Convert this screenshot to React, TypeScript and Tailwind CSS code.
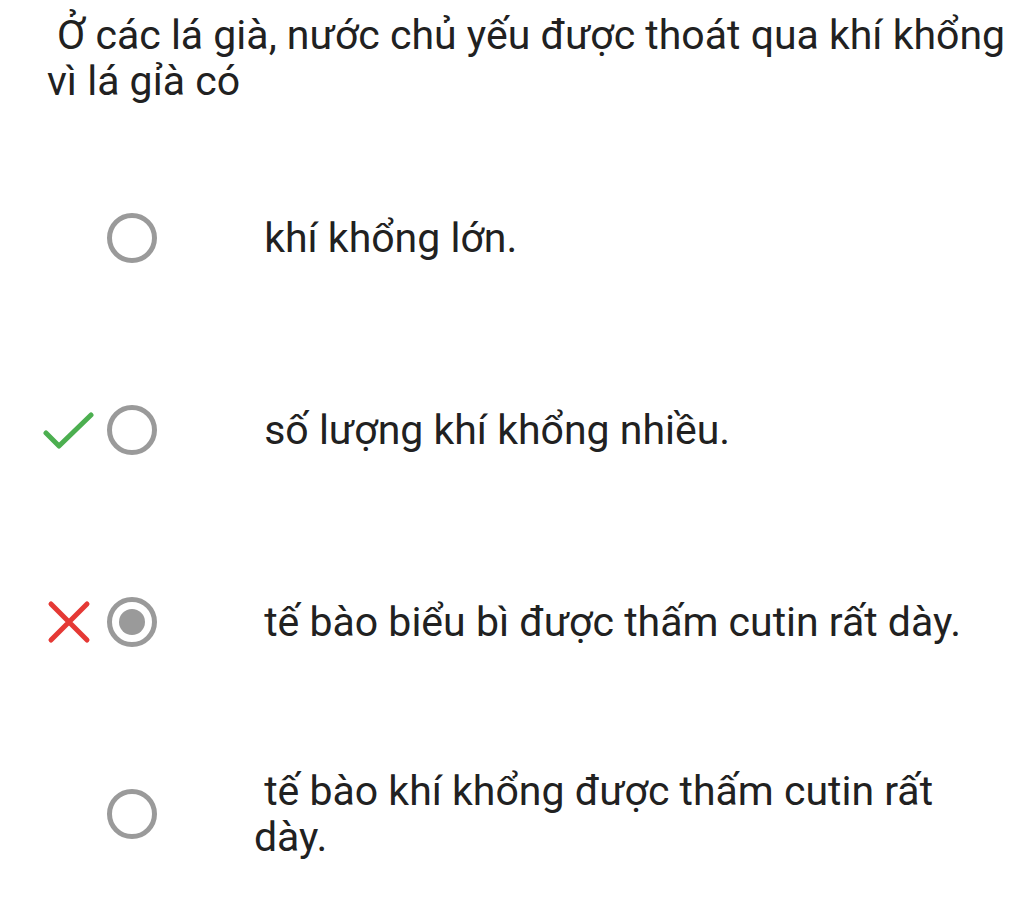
import { useState } from "react";

type Option = {
  text: string;
  mark?: "correct" | "wrong";
};

const options: Option[] = [
  { text: "\u00a0khí khổng lớn." },
  { text: "\u00a0số lượng khí khổng nhiều.", mark: "correct" },
  { text: "\u00a0tế bào biểu bì được thấm cutin rất dày.", mark: "wrong" },
  { text: "\u00a0tế bào khí khổng được thấm cutin rất dày." },
];

function CheckMark() {
  return (
    <svg width="52" height="40" viewBox="0 0 52 40" fill="none">
      <path
        d="M3 23 L16 36 L48 5"
        stroke="#4caf50"
        strokeWidth="5"
        strokeLinecap="round"
        strokeLinejoin="round"
      />
    </svg>
  );
}

function CrossMark() {
  return (
    <svg width="44" height="44" viewBox="0 0 44 44" fill="none">
      <path
        d="M4 4 L40 40 M40 4 L4 40"
        stroke="#e53935"
        strokeWidth="5"
        strokeLinecap="round"
      />
    </svg>
  );
}

export default function App() {
  const [selected, setSelected] = useState(2);

  return (
    <div className="min-h-[908px] w-[1024px] overflow-hidden bg-white text-[#212121] font-['Roboto',sans-serif]">
      <div className="w-[1007px] pl-[47px] pt-[12px] text-[41px] leading-[46px]">
        {"\u00a0Ở các lá già, nước chủ yếu được thoát qua khí khổng vì lá gỉà có"}
      </div>
      <div className="mt-[38px] flex flex-col">
        {options.map((opt, i) => (
          <div
            key={i}
            className="flex h-[192px] items-center cursor-pointer"
            onClick={() => setSelected(i)}
          >
            <div className="ml-[43px] flex w-[52px] items-center justify-center">
              {opt.mark === "correct" ? <CheckMark /> : null}
              {opt.mark === "wrong" ? <CrossMark /> : null}
            </div>
            <div className="ml-[12px] flex h-[50px] w-[50px] items-center justify-center rounded-full border-[5px] border-[#9a9a9a]">
              {selected === i ? (
                <div className="h-[26px] w-[26px] rounded-full bg-[#9a9a9a]" />
              ) : null}
            </div>
            <div className="ml-[97px] w-[715px] text-[41px] leading-[46px]">
              {opt.text}
            </div>
          </div>
        ))}
      </div>
    </div>
  );
}
